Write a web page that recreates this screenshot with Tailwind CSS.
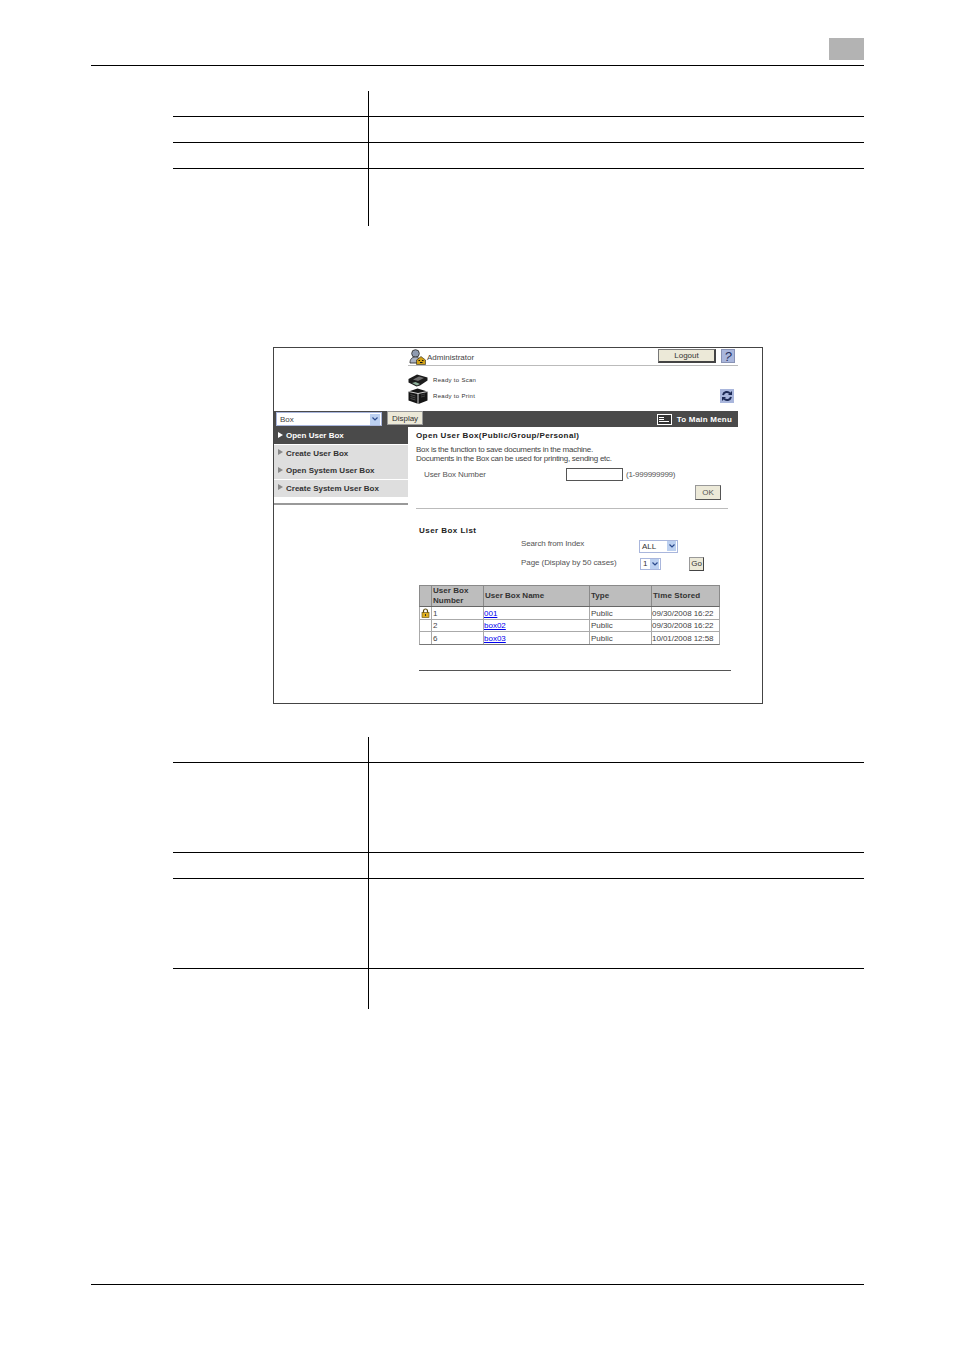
<!DOCTYPE html>
<html>
<head>
<meta charset="utf-8">
<script src="https://cdn.jsdelivr.net/npm/@tailwindcss/browser@4"></script>
</head>
<body class="bg-white font-['Liberation_Sans',Arial,sans-serif]">
<div class="w-[954px] h-[1350px] flex flex-col overflow-hidden">
  <!-- page header -->
  <div class="ml-[91px] w-[773px] h-[27px] mt-[38px] border-b border-black flex justify-end items-start box-content">
    <div class="w-[35px] h-[22px] bg-[#b3b3b3]"></div>
  </div>

  <!-- first table -->
  <div class="ml-[173px] w-[691px] mt-[25px] flex flex-col">
    <div class="h-[25px] flex"><div class="w-[195px]"></div><div class="border-l border-black"></div></div>
    <div class="h-[26px] border-t border-black flex"><div class="w-[195px]"></div><div class="border-l border-black"></div></div>
    <div class="h-[26px] border-t border-black flex"><div class="w-[195px]"></div><div class="border-l border-black"></div></div>
    <div class="h-[58px] border-t border-black flex"><div class="w-[195px]"></div><div class="border-l border-black"></div></div>
  </div>

  <!-- screenshot frame -->
  <div class="ml-[273px] mt-[121px] w-[490px] h-[357px] border border-[#444] flex flex-col shrink-0 text-[8px] leading-[9px] text-[#333]">
    <!-- top area -->
    <div class="h-[63px] ml-[134px] w-[330px] flex flex-col">
      <div class="h-[18px] border-b border-[#bbb] flex items-center">
        <svg class="w-[17px] h-[16px] ml-[1px]" viewBox="0 0 17 16">
          <circle cx="6.500" cy="4.500" r="3.800" fill="#8f9bb0" stroke="#333" stroke-width="0.900"/>
          <path d="M1 14c0-4 2-6 5.500-6S11 10 11 14z" fill="#aab2c2" stroke="#333" stroke-width="0.900"/>
          <path d="M7.500 11l4.500-3.500 4.500 3.500v4.500H7.500z" fill="#d0a015" stroke="#222" stroke-width="0.600"/>
          <path d="M9.500 11.500h1.500M13 11.500h1.500M11 13.500h2.500" stroke="#111" stroke-width="1.100"/>
        </svg>
        <span class="ml-[1px] text-[8px] text-[#444] mt-[1px]">Administrator</span>
        <div class="ml-auto mr-[3px] flex items-center gap-[5px] -mt-[1px]">
          <div class="w-[58px] h-[14px] bg-[#ece9d8] border border-[#777] border-r-2 border-b-2 border-r-[#444] border-b-[#444] flex items-center justify-center text-[8px] text-[#333]">Logout</div>
          <div class="w-[14px] h-[14px] bg-[#a9b6dc] border border-[#8892b5] flex items-center justify-center text-[13px] leading-[13px] italic text-[#26305c] font-['Liberation_Sans',sans-serif]">?</div>
        </div>
      </div>
      <div class="mt-[7px] flex items-center h-[15px]">
        <svg class="w-[20px] h-[13px]" viewBox="0 0 20 13">
          <path d="M0.500 5l8.500-4.500 10.500 3v3l-7.500 5-3.500 1-8-4z" fill="#1c1c1c"/>
          <path d="M5 5.500l6-3 5 1.500-6 3z" fill="#6f6f6f"/>
          <path d="M4 9l5 2.500 3-1.500-4.500-2z" fill="#8fb09a"/>
        </svg>
        <span class="ml-[5px] text-[6px] tracking-[0.3px] text-[#333]">Ready to Scan</span>
      </div>
      <div class="flex items-center h-[16px] relative">
        <svg class="w-[20px] h-[16px]" viewBox="0 0 20 16">
          <path d="M0.500 3.500l9-3 10 3v9l-9 3.500-10-3.500z" fill="#151515"/>
          <path d="M10 5.500l9.500-2M10 5.500V16M10 5.500L0.500 3.500" stroke="#e8e8e8" stroke-width="0.900" fill="none"/>
          <path d="M2.500 6.500l5 1.500M2.500 8.500l5 1.500M2.500 10.500l5 1.500" stroke="#666" stroke-width="0.700"/>
          <path d="M13 7l4-1M13 9l4-1" stroke="#555" stroke-width="0.700"/>
        </svg>
        <span class="ml-[5px] text-[6px] tracking-[0.3px] text-[#333]">Ready to Print</span>
        <div class="ml-auto mr-[4px] w-[14px] h-[14px] bg-[#a9b6dc] flex items-center justify-center">
          <svg class="w-[12px] h-[12px]" viewBox="0 0 12 12" fill="none" stroke="#1d2a55" stroke-width="2">
            <path d="M2 5a4 4 0 0 1 7-1.500M10 7a4 4 0 0 1-7 1.500"/>
            <path d="M11 1v4H7z" fill="#1d2a55" stroke="none"/>
            <path d="M1 11V7h4z" fill="#1d2a55" stroke="none"/>
          </svg>
        </div>
      </div>
    </div>

    <!-- dark bar -->
    <div class="w-[464px] h-[16px] bg-[#4a4a4a] flex items-stretch">
      <div class="ml-[2px] w-[106px] my-[1px] h-[14px] bg-white border border-[#a9b6dc] flex items-center justify-between pl-[3px] pr-[1px] text-[8px] text-[#444]">
        <span>Box</span>
        <span class="w-[10px] h-[11px] bg-[#bcd0f0] flex items-center justify-center">
          <svg class="w-[6px] h-[4px]" viewBox="0 0 6 4" fill="none" stroke="#2b4a8c" stroke-width="1.200"><path d="M0.500 0.500l2.500 2.500 2.500-2.500"/></svg>
        </span>
      </div>
      <div class="ml-[5px] w-[36px] mb-[2px] bg-[#ece9d8] border border-[#999] flex items-center justify-center text-[8px] text-[#333]">Display</div>
      <div class="ml-auto flex items-center mr-[6px] text-white font-bold text-[8px] tracking-[0.2px]">
        <div class="w-[15px] h-[11px] border border-white bg-[#333] mr-[5px] flex flex-col justify-center pl-[1px] gap-[1px]">
          <div class="w-[5px] h-[1px] bg-white"></div><div class="w-[5px] h-[1px] bg-white"></div><div class="w-[10px] h-[1px] bg-white"></div>
        </div>
        <span>To Main Menu</span>
      </div>
    </div>

    <!-- body -->
    <div class="flex flex-1">
      <!-- left menu -->
      <div class="w-[134px] shrink-0 flex flex-col font-bold">
        <div class="h-[17px] bg-[#4a4a4a] text-white flex items-center pl-[4px] gap-[3px]">
          <svg class="w-[5px] h-[6px] -mt-[2px]" viewBox="0 0 5 6"><path d="M0 0l5 3-5 3z" fill="#fff"/></svg><span>Open User Box</span>
        </div>
        <div class="h-[17px] mt-[0.5px] bg-[#dedede] text-[#333] flex items-center pl-[4px] gap-[3px]">
          <svg class="w-[5px] h-[6px] -mt-[2px]" viewBox="0 0 5 6"><path d="M0 0l5 3-5 3z" fill="#888"/></svg><span>Create User Box</span>
        </div>
        <div class="h-[17px] mt-[0.5px] bg-[#dedede] text-[#333] flex items-center pl-[4px] gap-[3px]">
          <svg class="w-[5px] h-[6px] -mt-[2px]" viewBox="0 0 5 6"><path d="M0 0l5 3-5 3z" fill="#888"/></svg><span>Open System User Box</span>
        </div>
        <div class="h-[17px] mt-[0.5px] bg-[#dedede] text-[#333] flex items-center pl-[4px] gap-[3px]">
          <svg class="w-[5px] h-[6px] -mt-[2px]" viewBox="0 0 5 6"><path d="M0 0l5 3-5 3z" fill="#888"/></svg><span>Create System User Box</span>
        </div>
        <div class="h-[2px] mt-[6px] bg-[#999]"></div>
      </div>

      <!-- right content -->
      <div class="flex-1 flex flex-col pl-[8px]">
        <div class="mt-[4px] h-[9px] font-bold text-[#222] tracking-[0.39px]">Open User Box(Public/Group/Personal)</div>
        <div class="mt-[5px] text-[8px] tracking-[-0.27px] leading-[9px] text-[#444]">
          <div>Box is the function to save documents in the machine.</div>
          <div>Documents in the Box can be used for printing, sending etc.</div>
        </div>
        <div class="mt-[1px] h-[20px] flex items-center ml-[8px] relative">
          <span class="text-[#555] w-[142px] tracking-[-0.12px] mt-[1px]">User Box Number</span>
          <div class="w-[57px] h-[13px] bg-white border border-[#555]"></div>
          <span class="ml-[3px] text-[#555] tracking-[-0.25px] mt-[1px]">(1-999999999)</span>
        </div>
        <div class="mt-[1px] ml-[279px] w-[26px] h-[15px] bg-[#ece9d8] border border-[#999] border-r-[#555] border-b-[#555] flex items-center justify-center text-[#555] text-[8px]">OK</div>
        <div class="mt-[8px] w-[312px] h-[1px] bg-[#bbb]"></div>

        <div class="ml-[3px] mt-[17px] h-[9px] font-bold text-[#222] tracking-[0.45px]">User Box List</div>
        <div class="ml-[105px] h-[14px] mt-[2px] flex items-center relative">
          <span class="w-[118px] text-[#555] -mt-[2px] tracking-[-0.13px]">Search from Index</span>
          <div class="w-[39px] h-[13px] mt-[4px] bg-white border border-[#a9b6dc] flex items-center justify-between pl-[2px] pr-[1px] text-[#333]">
            <span>ALL</span>
            <span class="w-[9px] h-[10px] bg-[#bcd0f0] flex items-center justify-center"><svg class="w-[6px] h-[4px]" viewBox="0 0 6 4" fill="none" stroke="#2b4a8c" stroke-width="1.200"><path d="M0.500 0.500l2.500 2.500 2.500-2.500"/></svg></span>
          </div>
        </div>
        <div class="ml-[105px] h-[15px] mt-[5px] flex items-center">
          <span class="w-[119px] text-[#555] -mt-[3px] tracking-[-0.07px]">Page (Display by 50 cases)</span>
          <div class="w-[21px] h-[12px] bg-white border border-[#a9b6dc] flex items-center justify-between pl-[2px] pr-[1px] text-[#333]">
            <span>1</span>
            <span class="w-[9px] h-[10px] bg-[#bcd0f0] flex items-center justify-center"><svg class="w-[6px] h-[4px]" viewBox="0 0 6 4" fill="none" stroke="#2b4a8c" stroke-width="1.200"><path d="M0.500 0.500l2.500 2.500 2.500-2.500"/></svg></span>
          </div>
          <div class="ml-[28px] w-[15px] h-[14px] bg-[#ece9d8] border border-[#999] border-r-[#444] border-b-[#444] flex items-center justify-center text-[#333]">Go</div>
        </div>

        <!-- list table -->
        <div class="ml-[3px] mt-[14px] w-[301px] flex flex-col text-[#444]">
          <div class="flex h-[22px] bg-[#bdbdbd] border border-[#8a8a8a] border-b-[#666] font-bold text-[#333] leading-[10px]">
            <div class="w-[12px] border-r border-[#8a8a8a]"></div>
            <div class="w-[52px] border-r border-[#8a8a8a] pl-[1px] flex items-center tracking-[0.05px]">User Box<br>Number</div>
            <div class="w-[106px] border-r border-[#8a8a8a] pl-[1px] flex items-center">User Box Name</div>
            <div class="w-[62px] border-r border-[#8a8a8a] pl-[1px] flex items-center">Type</div>
            <div class="flex-1 pl-[1px] flex items-center tracking-[0.1px]">Time Stored</div>
          </div>
          <div class="flex h-[13px] border-x border-b border-[#aaa]">
            <div class="w-[12px] border-r border-[#aaa] flex items-center justify-center">
              <svg class="w-[9px] h-[10px]" viewBox="0 0 9 10"><path d="M2.500 5V3a2 2 0 0 1 4 0v2" fill="none" stroke="#5a4a10" stroke-width="1.200"/><rect x="1" y="4.500" width="7" height="5" fill="#e0b020" stroke="#5a4a10" stroke-width="0.600"/><rect x="4" y="6" width="1" height="2" fill="#333"/></svg>
            </div>
            <div class="w-[52px] border-r border-[#aaa] pl-[1px] flex items-center">1</div>
            <div class="w-[106px] border-r border-[#aaa] flex items-center"><span class="text-[#0000ee] underline">001</span></div>
            <div class="w-[62px] border-r border-[#aaa] pl-[1px] flex items-center">Public</div>
            <div class="flex-1 flex items-center tracking-[-0.05px]">09/30/2008 16:22</div>
          </div>
          <div class="flex h-[12px] border-x border-b border-[#aaa]">
            <div class="w-[12px] border-r border-[#aaa]"></div>
            <div class="w-[52px] border-r border-[#aaa] pl-[1px] flex items-center">2</div>
            <div class="w-[106px] border-r border-[#aaa] flex items-center"><span class="text-[#0000ee] underline">box02</span></div>
            <div class="w-[62px] border-r border-[#aaa] pl-[1px] flex items-center">Public</div>
            <div class="flex-1 flex items-center tracking-[-0.05px]">09/30/2008 16:22</div>
          </div>
          <div class="flex h-[13px] border-x border-b border-x-[#aaa] border-b-[#777]">
            <div class="w-[12px] border-r border-[#aaa]"></div>
            <div class="w-[52px] border-r border-[#aaa] pl-[1px] flex items-center">6</div>
            <div class="w-[106px] border-r border-[#aaa] flex items-center"><span class="text-[#0000ee] underline">box03</span></div>
            <div class="w-[62px] border-r border-[#aaa] pl-[1px] flex items-center">Public</div>
            <div class="flex-1 flex items-center tracking-[-0.05px]">10/01/2008 12:58</div>
          </div>
        </div>
        <div class="ml-[3px] mt-[25px] w-[312px] h-[1px] bg-[#555]"></div>
      </div>
    </div>
  </div>

  <!-- second table -->
  <div class="ml-[173px] w-[691px] mt-[33px] flex flex-col">
    <div class="h-[25px] flex"><div class="w-[195px]"></div><div class="border-l border-black"></div></div>
    <div class="h-[90px] border-t border-black flex"><div class="w-[195px]"></div><div class="border-l border-black"></div></div>
    <div class="h-[26px] border-t border-black flex"><div class="w-[195px]"></div><div class="border-l border-black"></div></div>
    <div class="h-[90px] border-t border-black flex"><div class="w-[195px]"></div><div class="border-l border-black"></div></div>
    <div class="h-[41px] border-t border-black flex"><div class="w-[195px]"></div><div class="border-l border-black"></div></div>
  </div>

  <!-- footer rule -->
  <div class="ml-[91px] w-[773px] mt-[275px] h-[1px] bg-black"></div>
</div>
</body>
</html>
